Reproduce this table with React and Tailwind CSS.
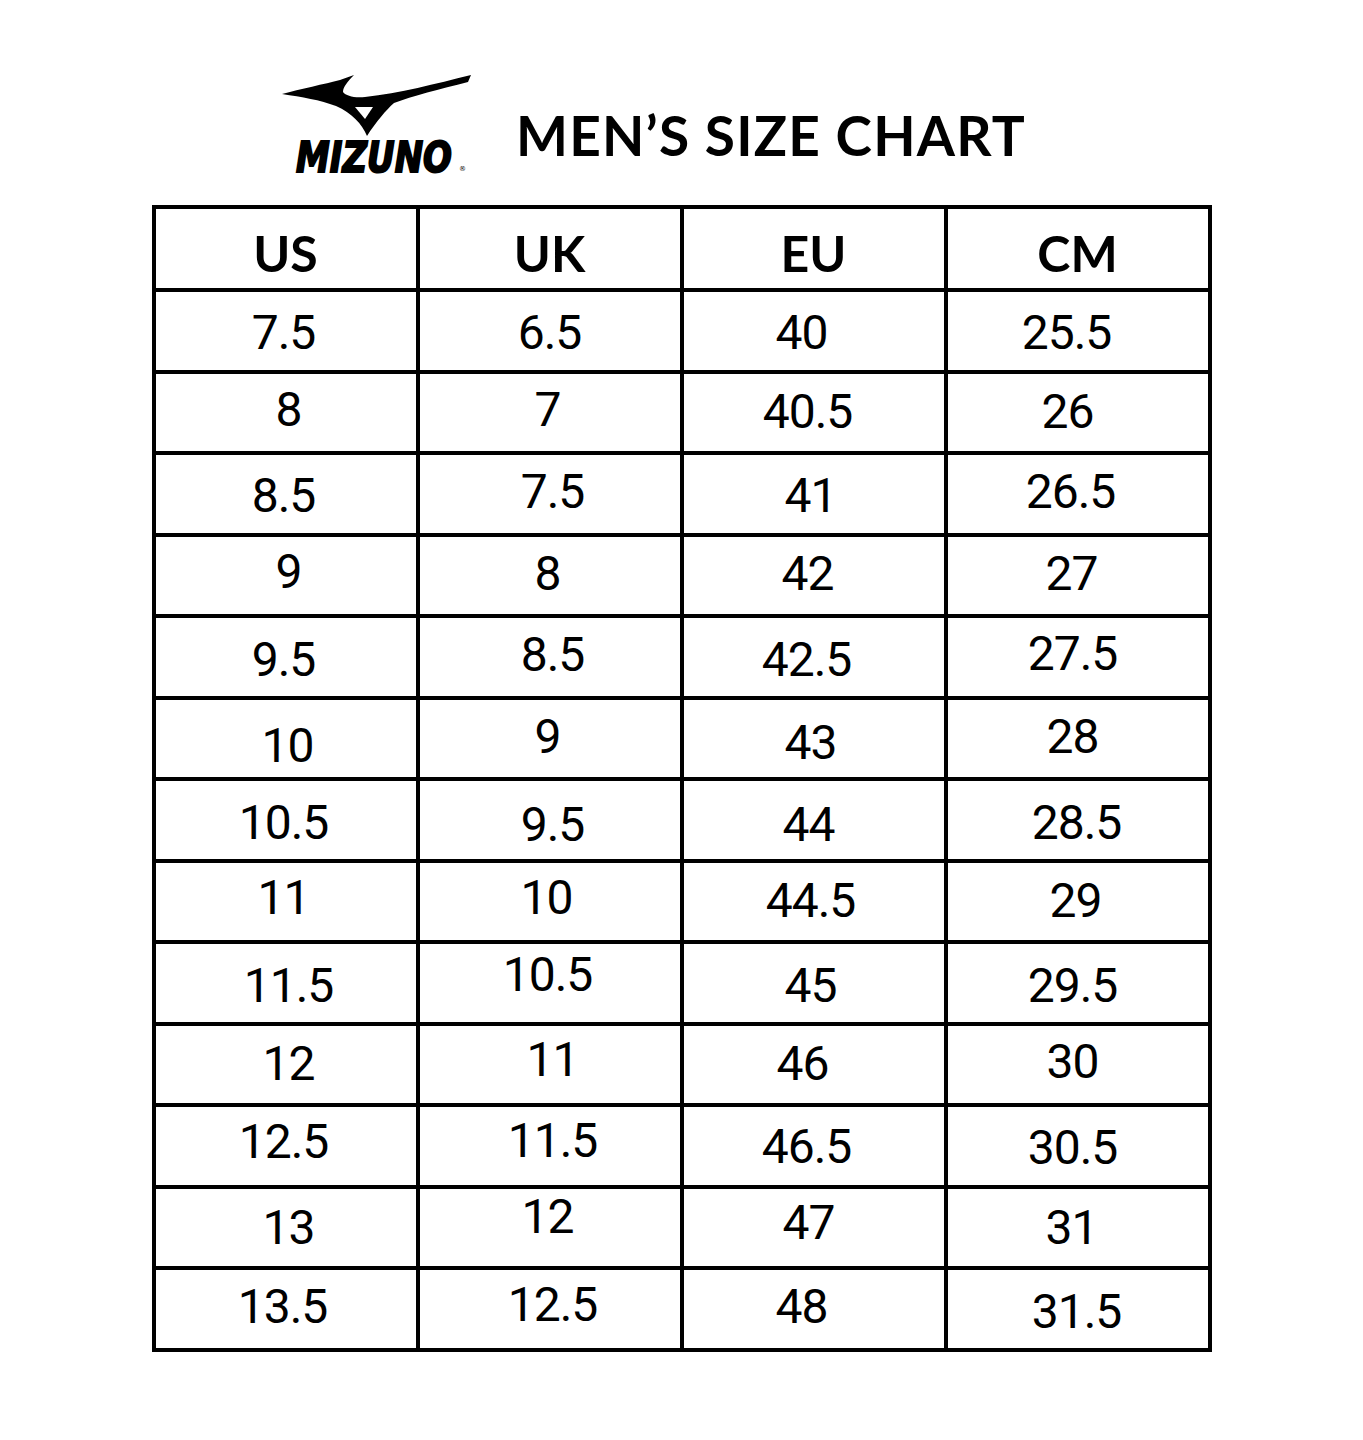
import React from 'react'

const headers = ['US', 'UK', 'EU', 'CM']

// each cell: [value, nudge] — the source chart's numbers sit a bit off-centre
const rows = [
  [['7.5', 'translate-x-[-2px] translate-y-[2px]'], ['6.5', 'translate-y-[2px]'], ['40', 'translate-x-[-12px] translate-y-[2px]'], ['25.5', 'translate-x-[-11px] translate-y-[2px]']],
  [['8', 'translate-x-[3px] translate-y-[-2px]'], ['7', 'translate-x-[-2px] translate-y-[-2px]'], ['40.5', 'translate-x-[-6px]'], ['26', 'translate-x-[-10px]']],
  [['8.5', 'translate-x-[-2px] translate-y-[2px]'], ['7.5', 'translate-x-[3px] translate-y-[-2px]'], ['41', 'translate-x-[-3px] translate-y-[2px]'], ['26.5', 'translate-x-[-7px] translate-y-[-2px]']],
  [['9', 'translate-x-[3px] translate-y-[-3px]'], ['8', 'translate-x-[-2px] translate-y-[-1px]'], ['42', 'translate-x-[-6px] translate-y-[-1px]'], ['27', 'translate-x-[-6px] translate-y-[-1px]']],
  [['9.5', 'translate-x-[-2px] translate-y-[3px]'], ['8.5', 'translate-x-[3px] translate-y-[-2px]'], ['42.5', 'translate-x-[-7px] translate-y-[3px]'], ['27.5', 'translate-x-[-5px] translate-y-[-3px]']],
  [['10', 'translate-x-[2px] translate-y-[8px]'], ['9', 'translate-x-[-2px] translate-y-[-1px]'], ['43', 'translate-x-[-3px] translate-y-[5px]'], ['28', 'translate-x-[-5px] translate-y-[-1px]']],
  [['10.5', 'translate-x-[-2px] translate-y-[3px]'], ['9.5', 'translate-x-[3px] translate-y-[5px]'], ['44', 'translate-x-[-5px] translate-y-[5px]'], ['28.5', 'translate-x-[-1px] translate-y-[3px]']],
  [['11', 'translate-x-[-2px] translate-y-[-3px]'], ['10', 'translate-x-[-3px] translate-y-[-3px]'], ['44.5', 'translate-x-[-3px]'], ['29', 'translate-x-[-2px]']],
  [['11.5', 'translate-x-[3px] translate-y-[3px]'], ['10.5', 'translate-x-[-2px] translate-y-[-8px]'], ['45', 'translate-x-[-3px] translate-y-[3px]'], ['29.5', 'translate-x-[-5px] translate-y-[3px]']],
  [['12', 'translate-x-[3px]'], ['11', 'translate-x-[3px] translate-y-[-4px]'], ['46', 'translate-x-[-11px]'], ['30', 'translate-x-[-5px] translate-y-[-2px]']],
  [['12.5', 'translate-x-[-2px] translate-y-[-4px]'], ['11.5', 'translate-x-[3px] translate-y-[-5px]'], ['46.5', 'translate-x-[-7px] translate-y-[1px]'], ['30.5', 'translate-x-[-5px] translate-y-[2px]']],
  [['13', 'translate-x-[3px] translate-y-[1px]'], ['12', 'translate-x-[-2px] translate-y-[-10px]'], ['47', 'translate-x-[-5px] translate-y-[-4px]'], ['31', 'translate-x-[-6px] translate-y-[1px]']],
  [['13.5', 'translate-x-[-3px] translate-y-[-2px]'], ['12.5', 'translate-x-[3px] translate-y-[-4px]'], ['48', 'translate-x-[-12px] translate-y-[-2px]'], ['31.5', 'translate-x-[-1px] translate-y-[3px]']],
]

function MizunoLogo() {
  return (
    <svg width="220" height="130" viewBox="0 0 220 130" className="shrink-0">
      {/* run bird */}
      <path
        d="M12,34 C30,29 55,24 70,20 L84,15 C78,21 73,27 73,32 C76,36 84,38 95,37 C130,33 165,24 201,15 L198,22 C170,29 142,36 124,43 C116,50 106,62 97,76 C92,64 82,53 66,46 C50,40 32,37 12,34 Z"
        fill="#000"
      />
      <path d="M85,47 L103,47 L95,59 Z" fill="#fff" />
      <text
        x="26"
        y="112"
        textLength="156"
        lengthAdjust="spacingAndGlyphs"
        fontFamily="'DejaVu Sans', sans-serif"
        fontWeight="900"
        fontStyle="italic"
        fontSize="42"
        fill="#000"
        stroke="#000"
        strokeWidth="2"
      >
        MIZUNO
      </text>
      <text x="189" y="111" fontFamily="'DejaVu Sans', sans-serif" fontSize="7" fill="#000">®</text>
    </svg>
  )
}

export default function App() {
  return (
    <div className="w-full min-h-[1440px] bg-white">
      {/* Header */}
      <div className="flex items-start pt-[60px] pl-[270px]">
        <MizunoLogo />
        <h1 className="ml-[26px] mt-[48px] text-[55px] leading-none font-bold tracking-[1.2px] text-black font-['Lato',sans-serif]">
          MEN’S SIZE CHART
        </h1>
      </div>

      {/* Size table */}
      <table className="mx-auto mt-[15px] w-[1060px] border-collapse table-fixed">
        <thead>
          <tr className="h-[83px]">
            {headers.map((h) => (
              <th key={h} className="border-4 border-black p-0 align-middle">
                <span className="block translate-y-[4px] text-[50px] leading-none font-bold text-black font-['Lato',sans-serif]">
                  {h}
                </span>
              </th>
            ))}
          </tr>
        </thead>
        <tbody>
          {rows.map((row, i) => (
            <tr key={i} className="h-[81.5px]">
              {row.map(([v, nudge], j) => (
                <td key={j} className="border-4 border-black p-0 text-center align-middle">
                  <span className={`block text-[48px] leading-none tracking-[-1px] text-black font-['Roboto',sans-serif] ${nudge}`}>
                    {v}
                  </span>
                </td>
              ))}
            </tr>
          ))}
        </tbody>
      </table>
    </div>
  )
}
